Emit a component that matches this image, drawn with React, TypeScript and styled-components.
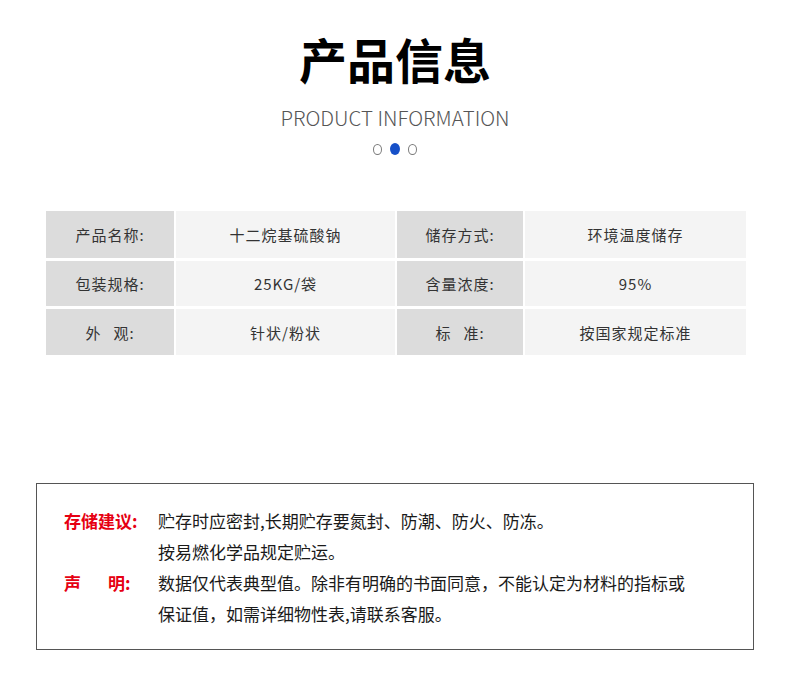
import React from "react";
import styled, { createGlobalStyle } from "styled-components";

const GlobalStyle = createGlobalStyle`
    html, body {
        margin: 0;
        padding: 0;
        background: #ffffff;
    }
    body {
        font-family: "Noto Sans CJK SC", "Noto Sans", sans-serif;
    }
`;

type Cell = { label: React.ReactNode; value: string };

function App() {
    const rows: Cell[][] = [
        [
            { label: "产品名称:", value: "十二烷基硫酸钠" },
            { label: "储存方式:", value: "环境温度储存" },
        ],
        [
            { label: "包装规格:", value: "25KG/袋" },
            { label: "含量浓度:", value: "95%" },
        ],
        [
            {
                label: (
                    <>
                        外<Space $w={12} />观:
                    </>
                ),
                value: "针状/粉状",
            },
            {
                label: (
                    <>
                        标<Space $w={12} />准:
                    </>
                ),
                value: "按国家规定标准",
            },
        ],
    ];

    return (
        <Page>
            <GlobalStyle />
            <Header>
                <Title>产品信息</Title>
                <Subtitle>PRODUCT INFORMATION</Subtitle>
                <Dots>
                    <Dot />
                    <Dot $active />
                    <Dot />
                </Dots>
            </Header>

            <InfoTable>
                {rows.map((row, i) =>
                    row.map((cell, j) => (
                        <React.Fragment key={`${i}-${j}`}>
                            <LabelCell>{cell.label}</LabelCell>
                            <ValueCell>{cell.value}</ValueCell>
                        </React.Fragment>
                    ))
                )}
            </InfoTable>

            <NoticeBox>
                <NoticeRow>
                    <NoticeLabel>存储建议:</NoticeLabel>
                    <NoticeText>
                        贮存时应密封,长期贮存要氮封、防潮、防火、防冻。
                        <br />
                        按易燃化学品规定贮运。
                    </NoticeText>
                </NoticeRow>
                <NoticeRow>
                    <NoticeLabel>
                        声<Space $w={27} />明:
                    </NoticeLabel>
                    <NoticeText>
                        数据仅代表典型值。除非有明确的书面同意，不能认定为材料的指标或
                        <br />
                        保证值，如需详细物性表,请联系客服。
                    </NoticeText>
                </NoticeRow>
            </NoticeBox>
        </Page>
    );
}

export default App;

const Page = styled.div`
    width: 790px;
    padding-top: 34px;
    padding-bottom: 40px;
    display: flex;
    flex-direction: column;
    align-items: center;
`;

const Header = styled.div`
    display: flex;
    flex-direction: column;
    align-items: center;
`;

const Title = styled.h1`
    margin: 0;
    font-size: 48px;
    line-height: 48px;
    font-weight: 700;
    color: #000;
    letter-spacing: 0;
`;

const Subtitle = styled.div`
    margin-top: 25px;
    font-size: 20.5px;
    line-height: 21px;
    font-weight: 300;
    color: #555;
`;

const Dots = styled.div`
    margin-top: 15px;
    display: flex;
    align-items: center;
    gap: 8px;
`;

const Dot = styled.span<{ $active?: boolean }>`
    display: block;
    box-sizing: border-box;
    width: ${(p) => (p.$active ? "10px" : "9px")};
    height: ${(p) => (p.$active ? "12px" : "11px")};
    border-radius: 50%;
    background: ${(p) => (p.$active ? "#1650c8" : "#fff")};
    border: ${(p) => (p.$active ? "none" : "1.5px solid #7a7a7a")};
`;

const InfoTable = styled.div`
    margin-top: 56px;
    margin-left: 2px;
    display: grid;
    grid-template-columns: 128px 219px 126px 221px;
    grid-template-rows: 47px 45px 46px;
    column-gap: 2px;
    row-gap: 3px;
    font-size: 15px;
    color: #333;
    letter-spacing: 1px;
`;

const LabelCell = styled.div`
    display: flex;
    align-items: center;
    justify-content: center;
    background: #dcdcdc;
`;

const ValueCell = styled.div`
    display: flex;
    align-items: center;
    justify-content: center;
    background: #f4f4f4;
`;

const Space = styled.span<{ $w: number }>`
    display: inline-block;
    width: ${(p) => p.$w}px;
`;

const NoticeBox = styled.div`
    margin-top: 128px;
    box-sizing: border-box;
    width: 718px;
    border: 1px solid #555;
    padding: 21px 20px 20px 27px;
    display: flex;
    flex-direction: column;
`;

const NoticeRow = styled.div`
    display: flex;
    font-size: 17px;
    line-height: 31px;
`;

const NoticeLabel = styled.div`
    width: 94px;
    flex-shrink: 0;
    color: #e60012;
    font-weight: 700;
    white-space: nowrap;
`;

const NoticeText = styled.div`
    color: #1a1a1a;
`;
